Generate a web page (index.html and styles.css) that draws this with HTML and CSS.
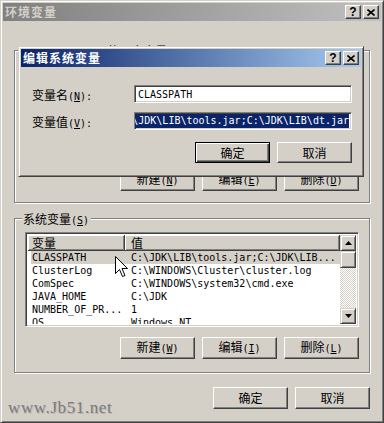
FILE: index.html
```html
<!DOCTYPE html>
<html lang="zh-CN">
<head>
  <meta charset="UTF-8">
  <meta name="viewport" content="width=device-width, initial-scale=1.0">
  <title>环境变量</title>
  <link rel="stylesheet" href="styles.css">
</head>
<body>

  <div class="window">
    <div class="titlebar">
      <span class="title">环境变量</span>
      <span class="tbtn help">?</span>
      <span class="tbtn"><svg width="8" height="7" viewBox="0 0 8 7"><path d="M0.5 0.5L7.5 6.5M7.5 0.5L0.5 6.5" stroke="#000" stroke-width="1.6"/></svg></span>
    </div>

    <div class="content">
      <div class="group user">
        <div class="legend"><span class="en">Administrator </span>的用户变量<span class="en">(<u>U</u>)</span></div>
        <div class="list"></div>
        <div class="btnrow">
          <button class="btn">新建<span class="en">(<u>N</u>)</span></button>
          <button class="btn">编辑<span class="en">(<u>E</u>)</span></button>
          <button class="btn">删除<span class="en">(<u>D</u>)</span></button>
        </div>
      </div>

      <div class="group system">
        <div class="legend">系统变量<span class="en">(<u>S</u>)</span></div>
        <div class="list">
          <div class="list-main">
            <div class="list-head">
              <div class="hcell c1">变量</div>
              <div class="hcell c2">值</div>
            </div>
            <div class="row sel"><span class="c1">CLASSPATH</span><span class="c2">C:\JDK\LIB\tools.jar;C:\JDK\LIB...</span></div>
            <div class="row"><span class="c1">ClusterLog</span><span class="c2">C:\WINDOWS\Cluster\cluster.log</span></div>
            <div class="row"><span class="c1">ComSpec</span><span class="c2">C:\WINDOWS\system32\cmd.exe</span></div>
            <div class="row"><span class="c1">JAVA_HOME</span><span class="c2">C:\JDK</span></div>
            <div class="row"><span class="c1">NUMBER_OF_PR...</span><span class="c2">1</span></div>
            <div class="row"><span class="c1">OS</span><span class="c2">Windows_NT</span></div>
          </div>
          <div class="vscroll">
            <div class="sbtn"><svg width="7" height="4" viewBox="0 0 7 4"><path d="M3.5 0L7 4H0Z" fill="#000"/></svg></div>
            <div class="thumb"></div>
            <div class="track"></div>
            <div class="sbtn"><svg width="7" height="4" viewBox="0 0 7 4"><path d="M0 0H7L3.5 4Z" fill="#000"/></svg></div>
          </div>
        </div>
        <div class="btnrow">
          <button class="btn">新建<span class="en">(<u>W</u>)</span></button>
          <button class="btn">编辑<span class="en">(<u>I</u>)</span></button>
          <button class="btn">删除<span class="en">(<u>L</u>)</span></button>
        </div>
      </div>

      <div class="footer">
        <button class="btn">确定</button>
        <button class="btn">取消</button>
      </div>
    </div>

    <div class="watermark">www.Jb51.net</div>

    <!-- edit dialog, lies over the main window -->
    <div class="dialog">
      <div class="titlebar active">
        <span class="title">编辑系统变量</span>
        <span class="tbtn help">?</span>
        <span class="tbtn"><svg width="8" height="7" viewBox="0 0 8 7"><path d="M0.5 0.5L7.5 6.5M7.5 0.5L0.5 6.5" stroke="#000" stroke-width="1.6"/></svg></span>
      </div>
      <div class="form">
        <div class="field">
          <label>变量名<span class="en">(<u>N</u>):</span></label>
          <div class="input"><span class="en">CLASSPATH</span></div>
        </div>
        <div class="field">
          <label>变量值<span class="en">(<u>V</u>):</span></label>
          <div class="input selected"><span class="en">C:\JDK\LIB\tools.jar;C:\JDK\LIB\dt.jar</span></div>
        </div>
        <div class="dlg-buttons">
          <button class="btn default">确定</button>
          <button class="btn">取消</button>
        </div>
      </div>
    </div>

    <svg class="cursor" width="13" height="21" viewBox="0 0 13 21"><path d="M0.5 0.5V17.5L4.5 13.5L7.5 20.5L10 19.5L7 12.5H12.5Z" fill="#fff" stroke="#000"/></svg>
  </div>

</body>
</html>
```

FILE: styles.css
```css
* {
  box-sizing: border-box;
}

body {
  margin: 0;
  background-color: #d4d0c8;
  font-family: "Noto Sans CJK SC", sans-serif;
  font-size: 12px;
  color: #000;
}

.en {
  font-family: "DejaVu Sans Mono", monospace;
  font-size: 10px;
}

.window {
  position: relative;
  width: 384px;
  height: 423px;
  padding: 2px;
  background-color: #d4d0c8;
  border: 1px solid;
  border-color: #d4d0c8 #404040 #404040 #d4d0c8;
  box-shadow: inset 1px 1px #fff, inset -1px -1px #808080;
}

/* title bars */
.titlebar {
  display: flex;
  align-items: center;
  height: 18px;
  padding: 0 2px;
  background: linear-gradient(to right, #808080, #c0c0c0);
}

.titlebar.active {
  background: linear-gradient(to right, #0a246a, #a6caf0);
}

.titlebar .title {
  flex: 1;
  font-weight: bold;
  line-height: 18px;
  letter-spacing: 1px;
  color: #d4d0c8;
}

.titlebar.active .title {
  color: #fff;
}

.tbtn {
  display: flex;
  justify-content: center;
  align-items: center;
  width: 16px;
  height: 14px;
  background-color: #d4d0c8;
  border: 1px solid;
  border-color: #fff #404040 #404040 #fff;
  box-shadow: inset -1px -1px #808080;
}

.tbtn + .tbtn {
  margin-left: 2px;
}

.tbtn.help {
  font-family: "Liberation Sans", sans-serif;
  font-weight: bold;
  font-size: 12px;
  line-height: 1;
}

/* main content */
.content {
  padding: 29px 11px 0 11px;
}

.group {
  padding: 0 10px;
  border: 1px solid #808080;
  box-shadow: inset 1px 1px #fff, 1px 1px #fff;
}

.group.user {
  height: 153px;
}

.group.system {
  margin-top: 15px;
  height: 155px;
}

.legend {
  width: fit-content;
  height: 13px;
  margin: -7px 0 0 -3px;
  padding: 0 2px 0 1px;
  line-height: 13px;
  background-color: #d4d0c8;
}

.list {
  display: flex;
  height: 95px;
  margin-top: 7px;
  padding: 2px;
  background-color: #fff;
  border: 1px solid;
  border-color: #808080 #fff #fff #808080;
  box-shadow: inset 1px 1px #404040, inset -1px -1px #d4d0c8;
}

.list-main {
  flex: 1;
  overflow: hidden;
}

.list-head {
  display: flex;
  height: 16px;
}

.hcell {
  height: 16px;
  line-height: 15px;
  background-color: #d4d0c8;
  border-right: 1px solid #404040;
  border-bottom: 1px solid #404040;
  box-shadow: inset 1px 1px #fff, inset -1px -1px #808080;
}

.hcell.c1 {
  width: 97px;
  padding-left: 4px;
}

.hcell.c2 {
  flex: 1;
  padding-left: 6px;
}

.row {
  display: flex;
  height: 13px;
  margin-left: 3px;
  line-height: 13px;
  white-space: nowrap;
  font-family: "DejaVu Sans Mono", monospace;
  font-size: 10px;
}

.row.sel {
  background-color: #d4d0c8;
}

.row .c1 {
  width: 94px;
  padding-left: 1px;
}

.row .c2 {
  padding-left: 6px;
}

.vscroll {
  display: flex;
  flex-direction: column;
  width: 16px;
}

.sbtn,
.thumb {
  display: flex;
  justify-content: center;
  align-items: center;
  height: 16px;
  background-color: #d4d0c8;
  border: 1px solid;
  border-color: #d4d0c8 #404040 #404040 #d4d0c8;
  box-shadow: inset 1px 1px #fff, inset -1px -1px #808080;
}

.thumb {
  height: 17px;
}

.track {
  flex: 1;
  background: conic-gradient(#fff 25%, #d4d0c8 0 50%, #fff 0 75%, #d4d0c8 0);
  background-size: 2px 2px;
}

.btnrow {
  display: flex;
  justify-content: flex-end;
  gap: 7px;
  margin-top: 10px;
}

.btn {
  width: 75px;
  height: 22px;
  padding: 0;
  font-family: "Noto Sans CJK SC", sans-serif;
  font-size: 12px;
  line-height: 18px;
  color: #000;
  background-color: #d4d0c8;
  border: 1px solid;
  border-color: #fff #404040 #404040 #fff;
  box-shadow: inset -1px -1px #808080;
}

.btn.default {
  border-color: #000;
  box-shadow: inset 1px 1px #fff, inset -1px -1px #404040, inset -2px -2px #808080;
}

.footer {
  display: flex;
  justify-content: flex-end;
  gap: 7px;
  margin-top: 14px;
}

.watermark {
  position: absolute;
  left: 7px;
  top: 397px;
  font-family: "Liberation Serif", serif;
  font-size: 17px;
  letter-spacing: 0.6px;
  color: #7c7c7c;
  text-shadow: 1px 1px #b8b5ae;
}

/* edit dialog */
.dialog {
  position: absolute;
  left: 17px;
  top: 45px;
  width: 346px;
  height: 131px;
  padding: 2px;
  background-color: #d4d0c8;
  border: 1px solid;
  border-color: #d4d0c8 #404040 #404040 #d4d0c8;
  box-shadow: inset 1px 1px #fff, inset -1px -1px #808080;
}

.form {
  padding: 18px 9px 0 11px;
}

.field {
  display: flex;
  align-items: center;
  height: 18px;
}

.field + .field {
  margin-top: 9px;
}

.field label {
  width: 102px;
}

.input {
  display: flex;
  align-items: center;
  width: 218px;
  height: 18px;
  padding: 2px 2px 2px 3px;
  overflow: hidden;
  white-space: nowrap;
  background-color: #fff;
  border: 1px solid;
  border-color: #808080 #fff #fff #808080;
  box-shadow: inset 1px 1px #404040, inset -1px -1px #d4d0c8;
}

.input.selected {
  justify-content: flex-end;
  padding: 2px;
}

.input.selected .en {
  height: 14px;
  line-height: 14px;
  color: #fff;
  background-color: #0a246a;
}

.dlg-buttons {
  display: flex;
  justify-content: flex-end;
  gap: 7px;
  margin-top: 12px;
}

.dlg-buttons .btn {
  height: 21px;
}

.cursor {
  position: absolute;
  left: 114px;
  top: 255px;
}
```
